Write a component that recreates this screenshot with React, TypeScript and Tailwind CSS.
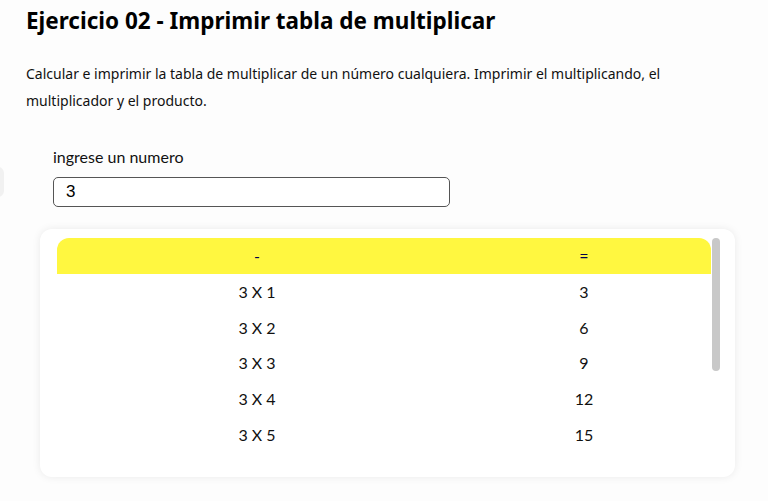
import { useState } from 'react';

const rows = Array.from({ length: 10 }, (_, i) => i + 1);

export default function App() {
  const [numero, setNumero] = useState("3");
  const n = Number(numero) || 0;

  return (
    <div className="min-h-[501px] bg-[#fdfdfd] text-black relative">
      {/* pestaña lateral */}
      <div className="absolute left-[-8px] top-[167px] h-[30px] w-[12px] rounded-md bg-[#f1f1f1]" />

      <div className="px-[26px] pt-[5px] font-['Noto_Sans',sans-serif]">
        <h1 className="text-[22.5px] font-bold leading-[32px]">
          Ejercicio 02 - Imprimir tabla de multiplicar
        </h1>
        <p className="mt-[23px] text-[14px] leading-[27px] text-[#111]">
          Calcular e imprimir la tabla de multiplicar de un número cualquiera. Imprimir el multiplicando, el
          <br />
          multiplicador y el producto.
        </p>
      </div>

      <div className="mt-[33px] px-[53px] font-['Lato',sans-serif]">
        <label htmlFor="numero" className="block text-[16px] leading-[20px] text-[#111]">
          ingrese un numero
        </label>
        <input
          id="numero"
          type="text"
          value={numero}
          onChange={(e) => setNumero(e.target.value)}
          className="mt-[10px] block h-[30px] w-[397px] rounded-[5px] border border-[#555] bg-white px-[12px] text-[17px] font-['Liberation_Sans',sans-serif] outline-none"
        />
      </div>

      <div className="ml-[40px] mr-[33px] mt-[22px] rounded-[12px] bg-white pl-[17px] pr-[15px] pt-[9px] pb-[11px] shadow-[0_0_8px_rgba(0,0,0,0.08)] font-['Lato',sans-serif]">
        <div className="flex h-[228px] gap-[1px]">
          <div className="flex-1 overflow-hidden">
            <table className="w-full border-collapse text-center text-[16px] text-[#111]">
              <thead>
                <tr className="h-[36px]">
                  <th className="w-[400px] rounded-tl-[12px] bg-[#fff740] font-normal text-[#00004a]">-</th>
                  <th className="rounded-tr-[12px] bg-[#fff740] font-normal text-[#00004a]">=</th>
                </tr>
              </thead>
              <tbody>
                {rows.map((i) => (
                  <tr key={i} className="h-[35.75px]">
                    <td>{n} X {i}</td>
                    <td>{n * i}</td>
                  </tr>
                ))}
              </tbody>
            </table>
          </div>
          {/* barra de desplazamiento */}
          <div className="w-[8px]">
            <div className="h-[133px] rounded-full bg-[#c8c8c8]" />
          </div>
        </div>
      </div>
    </div>
  );
}
